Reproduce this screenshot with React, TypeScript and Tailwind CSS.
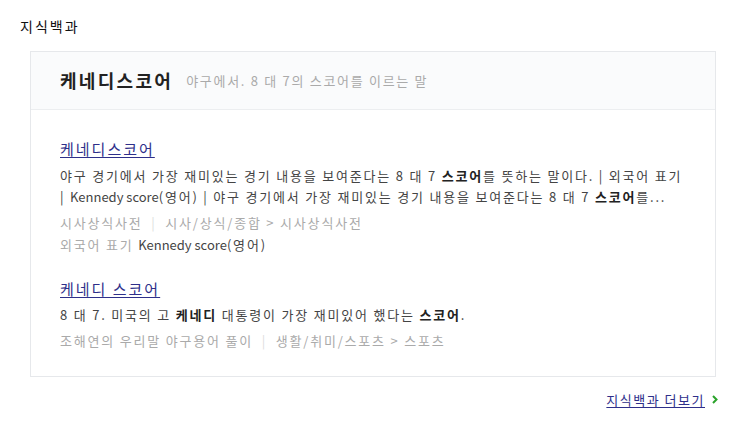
import React from "react";

const font = { fontFamily: '"Noto Sans CJK KR", "Noto Sans", sans-serif' };

export default function App() {
  return (
    <div className="w-[743px] h-[435px] bg-white text-[#333]" style={font}>
      <div className="pl-[20px] pt-[16px] text-[14px] leading-[20px] tracking-[2px] text-[#111]">지식백과</div>
      <div className="ml-[30px] mt-[15px] w-[686px] border border-[#e6e8eb]">
        <div className="h-[58px] bg-[#fafbfc] border-b border-[#eceef0] flex items-center pl-[29px] gap-[13px]">
          <span className="text-[18px] font-bold tracking-[2.3px] text-[#222]">케네디스코어</span>
          <span className="text-[13px] tracking-[1.7px] text-[#aaa]">야구에서. 8 대 7의 스코어를 이르는 말</span>
        </div>
        <div className="pl-[29px] pr-[10px] pt-[28px] pb-[25px] text-[13px] tracking-[1.8px]">
          <div>
            <a href="#" className="text-[15px] leading-[22px] tracking-[2px] text-[#2e2f8a] underline underline-offset-2">케네디스코어</a>
            <p className="mt-[5px] leading-[21px] text-[#444] whitespace-nowrap">
              야구 경기에서 가장 재미있는 경기 내용을 보여준다는 8 대 7 <b className="text-[#222]">스코어</b>를 뜻하는 말이다. | 외국어 표기
              <br />| <span className="tracking-[0px]">Kennedy score</span>(영어) | 야구 경기에서 가장 재미있는 경기 내용을 보여준다는 8 대 7 <b className="text-[#222]">스코어</b>를...
            </p>
            <div className="mt-[5px] leading-[21px] text-[#aaa]">
              시사상식사전 <span className="text-[#ddd] mx-[4px]">|</span> 시사/상식/종합 &gt; 시사상식사전
            </div>
            <div className="mt-[1px] leading-[21px] text-[#aaa]">
              외국어 표기 <span className="text-[#444] tracking-[0px]">Kennedy score</span><span className="text-[#444]">(영어)</span>
            </div>
          </div>
          <div className="mt-[23px]">
            <a href="#" className="text-[15px] leading-[22px] tracking-[2px] text-[#2e2f8a] underline underline-offset-2">케네디 스코어</a>
            <p className="mt-[4px] leading-[21px] text-[#444]">
              8 대 7. 미국의 고 <b className="text-[#222]">케네디</b> 대통령이 가장 재미있어 했다는 <b className="text-[#222]">스코어</b>.
            </p>
            <div className="mt-[5px] leading-[21px] text-[#aaa]">
              조해연의 우리말 야구용어 풀이 <span className="text-[#ddd] mx-[4px]">|</span> 생활/취미/스포츠 &gt; 스포츠
            </div>
          </div>
        </div>
      </div>
      <div className="w-[718px] mt-[13px] flex justify-end items-center gap-[7px] text-[13px] tracking-[1.5px]">
        <a href="#" className="text-[#2e2f8a] underline underline-offset-2">지식백과 더보기</a>
        <svg width="6" height="9" viewBox="0 0 6 9"><path d="M1 1l3.5 3.5L1 8" stroke="#2aa32a" strokeWidth="2" fill="none" /></svg>
      </div>
    </div>
  );
}
